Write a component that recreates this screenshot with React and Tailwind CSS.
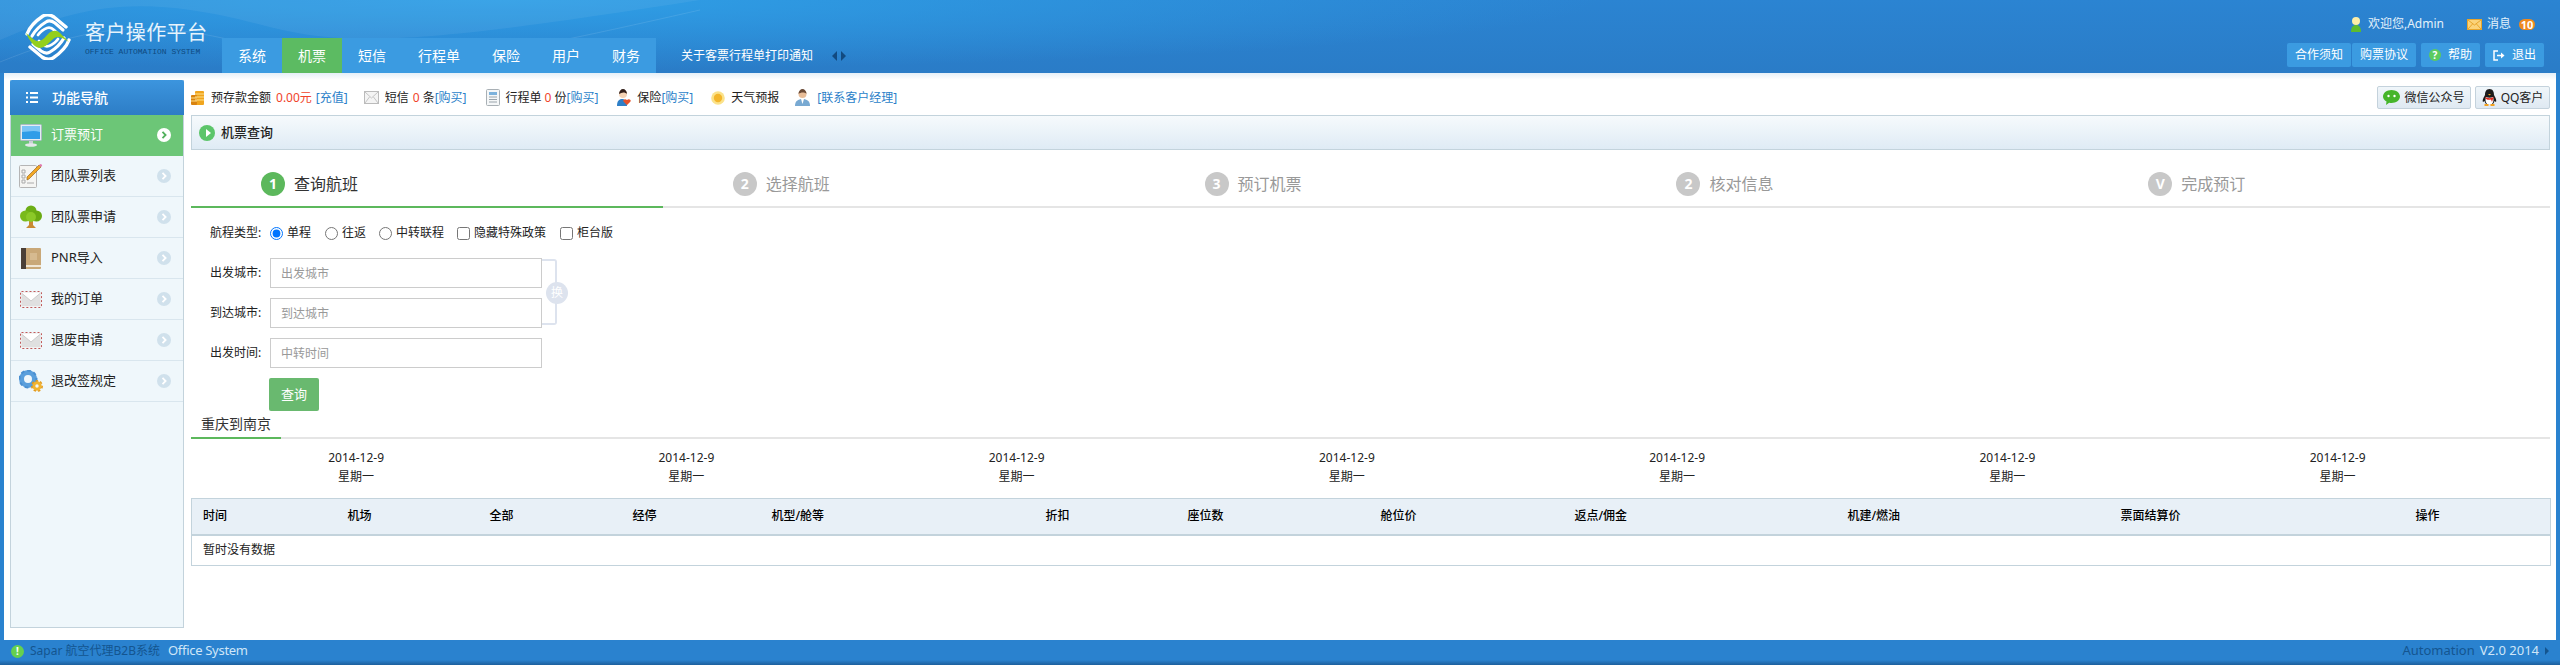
import React from "react";

const tabs = ["系统", "机票", "短信", "行程单", "保险", "用户", "财务"];
const steps = [
  ["1", "查询航班"],
  ["2", "选择航班"],
  ["3", "预订机票"],
  ["2", "核对信息"],
  ["V", "完成预订"],
];
const columns = [
  ["时间", 145], ["机场", 142], ["全部", 143], ["经停", 139], ["机型/舱等", 274], ["折扣", 142],
  ["座位数", 193], ["舱位价", 194], ["返点/佣金", 273], ["机建/燃油", 273], ["票面结算价", 295], ["操作", 146],
];
const dates = [1, 2, 3, 4, 5, 6, 7];

function Logo() {
  const bands = (
    <g fill="none" stroke="#fff" strokeLinecap="round">
      <path d="M2 20C5 12 12 6 18 2c4-2 8-1 11 1l12 10" strokeWidth="3.4" />
      <path d="M7 22c4-7 9-11 14-14 3-2 6-1 9 1l8 7" strokeWidth="3.2" />
      <path d="M13 21c3-4 6-6 9-7 3-1 5 0 7 2l3 3" strokeWidth="2.8" />
    </g>
  );
  return (
    <svg width="46" height="46" viewBox="0 0 46 46" className="shrink-0">
      {bands}
      <g transform="rotate(180 23 23)">{bands}</g>
      <path d="M1 19c4 3 7 7 11 8 5 1 8-4 12-8 4-3 8-3 11 0l9 9c-3-2-5-3-7-4-4-2-7-1-10 2-5 5-8 8-13 8-5-1-10-8-13-15Z" fill="#94cf1d" />
    </svg>
  );
}

function HeaderWave() {
  return (
    <svg className="absolute left-0 top-0" width="700" height="73" viewBox="0 0 700 73">
      <path d="M0 40C70 10 120 0 190 10c60 8 90 25 150 28 80 4 180-10 360-38H0Z" fill="#fff" opacity="0.06" />
      <path d="M0 62c70-28 120-40 190-30 60 9 110 30 170 32 90 2 190-20 340-54" fill="none" stroke="#fff" opacity="0.1" />
    </svg>
  );
}

function Chevron({ active }) {
  return (
    <svg width="14" height="14" viewBox="0 0 14 14" className="shrink-0">
      <circle cx="7" cy="7" r="7" fill={active ? "#fff" : "#d0e1ec"} />
      <path d="M5.5 3.8 8.6 7l-3.1 3.2" fill="none" stroke={active ? "#52b05d" : "#fff"} strokeWidth="1.8" />
    </svg>
  );
}

function Coins() {
  return (
    <svg width="14" height="16" viewBox="0 0 14 16">
      <rect x="4" y="1" width="9" height="14" rx="1" fill="#f0a51e" />
      <rect x="0" y="5" width="6" height="10" rx="1" fill="#d9830f" />
      <path d="M4 4h9M4 7h9M4 10h9M0 8h6M0 11h6" stroke="#ffe08a" />
    </svg>
  );
}

function MailGray() {
  return (
    <svg width="15" height="15" viewBox="0 0 15 15">
      <rect x="0.5" y="1.5" width="14" height="12" fill="#f4f4f4" stroke="#bbb" />
      <path d="m1 2 6.500 6L14 2M1 13l4.500-6M14 13 9.500 7" fill="none" stroke="#c4c4c4" />
    </svg>
  );
}

function DocIcon() {
  return (
    <svg width="14" height="17" viewBox="0 0 14 17">
      <rect x="0.5" y="0.500" width="13" height="16" rx="1" fill="#f5f7f8" stroke="#a9b0b5" />
      <rect x="3" y="3" width="8" height="3" fill="#7db2dc" />
      <path d="M3 8h8M3 10.500h8M3 13h8" stroke="#9aa4ab" />
    </svg>
  );
}

function InsuranceIcon() {
  return (
    <svg width="14" height="17" viewBox="0 0 14 17">
      <path d="M0 17c0-5 2-7 5-7s5 2 5 7Z" fill="#2e7fc7" />
      <circle cx="6" cy="5" r="4" fill="#f4d3b5" />
      <path d="M2 5c0-3 2-5 4-5s4 2 4 5C8 3 5 3 2 5Z" fill="#33201a" />
      <path d="M10 16 6.500 12.500c-1-1.500 1.500-3.500 3.500-1.500 2-2 4.500 0 3.500 1.500Z" fill="#e5522b" />
    </svg>
  );
}

function SunIcon() {
  return (
    <svg width="14" height="14" viewBox="0 0 14 14">
      <circle cx="7" cy="7" r="6.800" fill="#fbe28a" />
      <circle cx="7" cy="7" r="4.200" fill="#f3b62c" />
    </svg>
  );
}

function ManagerIcon() {
  return (
    <svg width="15" height="17" viewBox="0 0 15 17">
      <path d="M0 17c0-5 3-7 7.500-7s7.500 2 7.500 7Z" fill="#78a9d2" />
      <path d="M6 10h3l-1.500 5Z" fill="#fff" />
      <circle cx="7.500" cy="5" r="4" fill="#e8bd98" />
      <path d="M3.500 5c0-3 2-5 4-5s4 2 4 5c-1-2-6-2-8 0Z" fill="#6a4a36" />
    </svg>
  );
}

function Monitor() {
  return (
    <svg width="22" height="23" viewBox="0 0 22 23">
      <rect x="0.500" y="0.500" width="21" height="16" rx="1" fill="#e5edf2" stroke="#a9bac4" />
      <rect x="2" y="2" width="18" height="13" fill="#2f9de8" />
      <path d="M2 2h18v6C13 6 8 8 2 8Z" fill="#7cc5f5" />
      <path d="M9 17h4v3H9Z" fill="#c8d0d4" />
      <ellipse cx="11" cy="21" rx="6" ry="1.800" fill="#e4e8ea" />
    </svg>
  );
}

function Notepad() {
  return (
    <svg width="24" height="24" viewBox="0 0 24 24">
      <rect x="0.500" y="1.500" width="17" height="22" rx="1" fill="#f5f5f3" stroke="#b5b5b5" />
      <path d="M3 6h3v3H3ZM3 11h3v3H3ZM3 16h3v3H3Z" fill="none" stroke="#aaa" />
      <path d="M8 19h7" stroke="#aaa" />
      <path d="m8 16 2-1L22 3l-2-2L8 13Z" fill="#f2a724" stroke="#8c5a15" strokeWidth="0.600" />
      <path d="m20 1 2 2 1-1c.500-1-.500-2-1.500-2Z" fill="#e27bb0" />
    </svg>
  );
}

function Tree() {
  return (
    <svg width="22" height="24" viewBox="0 0 22 24">
      <path d="M9 14h4v6l3 3H6l3-3Z" fill="#c98a33" />
      <circle cx="11" cy="6" r="5.500" fill="#6cae16" />
      <circle cx="5.500" cy="11" r="5.500" fill="#79ba1c" />
      <circle cx="16.500" cy="11" r="5.500" fill="#6aaa12" />
      <circle cx="11" cy="12" r="5" fill="#8bc928" />
    </svg>
  );
}

function Book() {
  return (
    <svg width="20" height="21" viewBox="0 0 20 21">
      <rect x="0" y="0" width="20" height="21" rx="1" fill="#c9a878" />
      <rect x="0" y="0" width="5" height="21" fill="#4a3f37" />
      <rect x="5" y="17" width="15" height="2" fill="#f0e6d4" />
      <path d="M9 5h7v7H9Z" fill="#d6ba90" />
    </svg>
  );
}

function Envelope() {
  return (
    <svg width="22" height="17" viewBox="0 0 22 17">
      <rect x="0.500" y="0.500" width="21" height="16" rx="1" fill="#f2f2f2" stroke="#c05a5a" strokeDasharray="2 2" />
      <path d="m1.500 2 9.500 8 9.500-8v13h-19Z" fill="#e0e0e0" />
      <path d="m1.500 2 9.500 8 9.500-8" fill="#fff" stroke="#ccc" />
    </svg>
  );
}

function Gears() {
  return (
    <svg width="24" height="22" viewBox="0 0 24 22">
      <circle cx="9" cy="9" r="6.500" fill="none" stroke="#5a9fdc" strokeWidth="5" />
      <circle cx="9" cy="9" r="8.500" fill="none" stroke="#4a8fd0" strokeWidth="2" strokeDasharray="3.500 3" />
      <circle cx="18" cy="16" r="3.200" fill="none" stroke="#f3b42f" strokeWidth="3" />
      <circle cx="18" cy="16" r="5.200" fill="none" stroke="#e39a1c" strokeWidth="1.500" strokeDasharray="2.500 2" />
    </svg>
  );
}

function Wechat() {
  return (
    <svg width="17" height="15" viewBox="0 0 17 15">
      <path d="M8.500 0C13 0 17 2.800 17 6.500S13 13 8.500 13c-.8 0-1.600-.1-2.300-.3L3 15l.5-3.500C1.300 10.300 0 8.500 0 6.500 0 2.800 4 0 8.500 0Z" fill="#46b52a" />
      <circle cx="5.500" cy="6" r="1.200" fill="#fff" />
      <circle cx="11.500" cy="6" r="1.200" fill="#fff" />
    </svg>
  );
}

function Penguin() {
  return (
    <svg width="15" height="17" viewBox="0 0 15 17">
      <path d="M7.500 0C11 0 12 3 12 6c1 2 3 5 2 7l-1.500-1c-.3 1-.8 2-1.500 3H4c-.7-1-1.200-2-1.500-3L1 13C0 11 2 8 3 6c0-3 1-6 4.500-6Z" fill="#1b1b1b" />
      <path d="M4 8c2 1 5 1 7 0 1 3 .5 5-1 7H5C3.500 13 3 11 4 8Z" fill="#fff" />
      <path d="M3 8c3 1.500 6 1.500 9 0l-1 2-1 3-1-2.500c-2 .5-3 .5-5-.5Z" fill="#e02a1f" />
      <path d="M2.500 15h4v2h-4ZM8.500 15h4v2h-4Z" fill="#f4a11e" />
      <path d="M6 5h3l-1.500 1.500Z" fill="#f4a11e" />
    </svg>
  );
}

function App() {
  const menu = [
    ["订票预订", <Monitor />, true],
    ["团队票列表", <Notepad />],
    ["团队票申请", <Tree />],
    ["PNR导入", <Book />],
    ["我的订单", <Envelope />],
    ["退废申请", <Envelope />],
    ["退改签规定", <Gears />],
  ];

  return (
    <div className="flex h-[665px] w-[2560px] flex-col overflow-hidden bg-[#2a82cf] font-['Noto_Sans','Noto_Sans_CJK_SC',sans-serif] text-[12px] text-[#222]">
      {/* Header */}
      <header className="relative h-[73px] shrink-0 bg-gradient-to-b from-[#2b84d2] to-[#2a7cc7]">
        <div className="absolute inset-0 bg-[radial-gradient(ellipse_1100px_70px_at_500px_0px,#2f9fe6,transparent)]" />
        <HeaderWave />
        <div className="relative flex h-full">
          <div className="flex w-[222px] shrink-0 pl-[25px] pt-[14px]">
            <Logo />
            <div className="ml-[14px] pt-[6px]">
              <div className="text-[20px] leading-[26px] tracking-[0.4px] text-[#e6f3fc]">客户操作平台</div>
              <div className="mt-[1px] font-['Liberation_Mono',monospace] text-[8px] leading-[10px] text-[#0f4a80]">OFFICE AUTOMATION SYSTEM</div>
            </div>
          </div>

          <nav className="mt-[38px] flex h-[35px] bg-[#3b9be1]">
            {tabs.map((t) => (
              <div key={t} className={`px-4 text-[14px] leading-[35px] text-white ${t === "机票" ? "bg-[#5cbb62]" : ""}`}>
                {t}
              </div>
            ))}
          </nav>

          <div className="ml-[25px] mt-[47px] flex h-[18px] items-center leading-[18px] text-white">
            关于客票行程单打印通知
            <span className="ml-[19px] h-0 w-0 border-y-[5px] border-r-[5px] border-y-transparent border-r-[#124a80]" />
            <span className="ml-[4px] h-0 w-0 border-y-[5px] border-l-[5px] border-y-transparent border-l-[#124a80]" />
          </div>

          <div className="ml-auto mr-[16px] flex flex-col items-end pt-[15px]">
            <div className="mr-[9px] flex h-[18px] items-center text-[#e3f1fb]">
              <svg width="10" height="15" viewBox="0 0 10 15">
                <circle cx="5" cy="4" r="4" fill="#fdeea8" />
                <path d="M0 15c0-5 2-7 5-7s5 2 5 7Z" fill="#5dbb2e" />
              </svg>
              <span className="ml-[7px]">欢迎您,Admin</span>
              <svg className="ml-[23px]" width="15" height="11" viewBox="0 0 15 11">
                <rect x="0.500" y="0.500" width="14" height="10" fill="#fbd37a" stroke="#e8a52c" />
                <path d="m1 1 6.500 5L14 1M1 10l4.500-5M14 10 9.500 5" fill="none" stroke="#e8a52c" />
              </svg>
              <span className="ml-[5px]">消息</span>
              <span className="ml-[8px] h-[11px] w-[16px] rounded-full bg-[#ee8a1e] text-center text-[11px] font-bold leading-[11px] text-white">10</span>
            </div>
            <div className="mt-[10px] flex h-[24px] items-stretch text-white">
              <div className="w-[64px] rounded-[2px] bg-[#3b9be1] text-center leading-[24px]">合作须知</div>
              <div className="ml-[1px] w-[64px] rounded-[2px] bg-[#3b9be1] text-center leading-[24px]">购票协议</div>
              <div className="ml-[5px] flex w-[59px] items-center justify-center gap-[7px] rounded-[2px] bg-[#3b9be1]">
                <span className="h-[12px] w-[12px] rounded-full bg-[#5ccb5f] text-center text-[10px] font-bold leading-[12px]">?</span>
                帮助
              </div>
              <div className="ml-[5px] flex w-[59px] items-center justify-center gap-[7px] rounded-[2px] bg-[#3b9be1]">
                <svg width="12" height="11" viewBox="0 0 12 11" fill="none" stroke="#fff" strokeWidth="1.500">
                  <path d="M5 1H1v9h4M4 5.500h5" />
                  <path d="M8 2.500 11.500 5.500 8 8.500Z" fill="#fff" stroke="none" />
                </svg>
                退出
              </div>
            </div>
          </div>
        </div>
      </header>

      {/* Body */}
      <div className="mx-[4px] flex h-[567px] shrink-0 bg-gradient-to-b from-[#e4eff8] from-0% to-white to-[7px] pl-[6px] pr-[6px] pt-[7px]">
        <aside className="h-[548px] w-[174px] shrink-0 border border-t-0 border-[#c3d3dc] bg-[#eff7fb]">
          <div className="-mx-[1px] flex h-[35px] items-center rounded-t-[2px] bg-gradient-to-b from-[#3c95de] to-[#2d7dc6] pl-[16px] text-[14px] font-medium text-white">
            <svg width="12" height="11" viewBox="0 0 12 11" fill="#fff">
              <path d="M0 0h2v2H0ZM4 0h8v2H4ZM0 4.500h2v2H0ZM4 4.500h8v2H4ZM0 9h2v2H0ZM4 9h8v2H4Z" />
            </svg>
            <span className="ml-[14px]">功能导航</span>
          </div>
          {menu.map(([label, icon, active]) => (
            <div
              key={label}
              className={`flex h-[41px] items-center border-b pr-[12px] text-[13px] ${
                active ? "h-[40px] border-[#6cc677] bg-[#6cc677] text-white" : "border-[#d9e6ee]"
              }`}
            >
              <span className="flex w-[40px] shrink-0 justify-center">{icon}</span>
              <span>{label}</span>
              <span className="ml-auto">
                <Chevron active={active} />
              </span>
            </div>
          ))}
        </aside>

        <main className="ml-[7px] min-w-0 flex-1">
          {/* Balance row */}
          <div className="flex h-[35px] items-center">
            <Coins />
            <span className="ml-[6px]">预存款金额</span>
            <span className="ml-[5px] text-[#f0432a]">0.00元</span>
            <span className="ml-[4px] text-[#2b7fc9]">[充值]</span>
            <span className="ml-[16px] flex"><MailGray /></span>
            <span className="ml-[6px]">短信</span>
            <span className="ml-[4px] text-[#f0432a]">0</span>
            <span className="ml-[3px]">条</span>
            <span className="text-[#2b7fc9]">[购买]</span>
            <span className="ml-[19px] flex"><DocIcon /></span>
            <span className="ml-[6px]">行程单</span>
            <span className="ml-[3px] text-[#f0432a]">0</span>
            <span className="ml-[3px]">份</span>
            <span className="text-[#2b7fc9]">[购买]</span>
            <span className="ml-[19px] flex"><InsuranceIcon /></span>
            <span className="ml-[6px]">保险</span>
            <span className="text-[#2b7fc9]">[购买]</span>
            <span className="ml-[18px] flex"><SunIcon /></span>
            <span className="ml-[6px]">天气预报</span>
            <span className="ml-[16px] flex"><ManagerIcon /></span>
            <span className="ml-[7px] text-[#2b7fc9]">[联系客户经理]</span>
            <div className="ml-auto flex h-[23px] w-[94px] items-center justify-center gap-[4px] rounded-[2px] border border-[#c4d2dc] bg-gradient-to-b from-[#f0f6fa] to-[#dfe9f2]">
              <Wechat />
              微信公众号
            </div>
            <div className="ml-[4px] flex h-[23px] w-[75px] items-center justify-center gap-[4px] rounded-[2px] border border-[#c4d2dc] bg-gradient-to-b from-[#f0f6fa] to-[#dfe9f2]">
              <Penguin />
              QQ客户
            </div>
          </div>

          {/* Title bar */}
          <div className="flex h-[35px] items-center border border-[#c3d3dc] bg-gradient-to-b from-[#f6fafc] to-[#dfebf5] pl-[7px] font-medium">
            <span className="flex h-[16px] w-[16px] items-center justify-center rounded-full bg-[#5cc56a]">
              <span className="ml-[2px] h-0 w-0 border-y-[4px] border-l-[5px] border-y-transparent border-l-white" />
            </span>
            <span className="ml-[6px] text-[13px] leading-none">机票查询</span>
          </div>

          {/* Steps */}
          <div className="grid h-[58px] grid-cols-5">
            {steps.map(([n, label], i) => (
              <div
                key={label}
                className={`flex items-center border-b-2 pl-[70px] pt-[12px] ${i === 0 ? "border-[#5cb85c] text-[#333]" : "border-[#e5e5e5] text-[#999]"}`}
              >
                <span className={`h-[24px] w-[24px] rounded-full text-center text-[14px] font-bold leading-[24px] text-white ${i === 0 ? "bg-[#5cb85c]" : "bg-[#c8c8c8]"}`}>
                  {n}
                </span>
                <span className="ml-[9px] text-[16px]">{label}</span>
              </div>
            ))}
          </div>

          {/* Search form */}
          <div className="pl-[19px]">
            <div className="mt-[13px] flex h-[24px] items-center">
              <span className="w-[60px]">航程类型:</span>
              <input type="radio" name="trip" defaultChecked className="m-0 h-[13px] w-[13px]" />
              <span className="ml-[4px]">单程</span>
              <input type="radio" name="trip" className="ml-[14px] h-[13px] w-[13px]" />
              <span className="ml-[4px]">往返</span>
              <input type="radio" name="trip" className="ml-[13px] h-[13px] w-[13px]" />
              <span className="ml-[4px]">中转联程</span>
              <input type="checkbox" className="ml-[13px] h-[13px] w-[13px]" />
              <span className="ml-[4px]">隐藏特殊政策</span>
              <input type="checkbox" className="ml-[14px] h-[13px] w-[13px]" />
              <span className="ml-[4px]">柜台版</span>
            </div>

            <div className="relative mt-[13px] w-[360px]">
              <div className="flex items-center">
                <span className="w-[60px]">出发城市:</span>
                <input placeholder="出发城市" className="h-[30px] w-[272px] border border-[#ccc] pl-[10px] placeholder:text-[#999]" />
              </div>
              <div className="mt-[10px] flex items-center">
                <span className="w-[60px]">到达城市:</span>
                <input placeholder="到达城市" className="h-[30px] w-[272px] border border-[#ccc] pl-[10px] placeholder:text-[#999]" />
              </div>
              <div className="mt-[10px] flex items-center">
                <span className="w-[60px]">出发时间:</span>
                <input placeholder="中转时间" className="h-[30px] w-[272px] border border-[#ccc] pl-[10px] placeholder:text-[#999]" />
              </div>
              <div className="absolute left-[332px] top-[1px] h-[66px] w-[15px] rounded-r-[3px] border-2 border-l-0 border-[#dde3ee]" />
              <div className="absolute left-[336px] top-[24px] h-[22px] w-[22px] rounded-full bg-[#dde3ee] text-center leading-[22px] text-white">换</div>
            </div>

            <button className="ml-[59px] mt-[10px] block h-[33px] w-[50px] rounded-[2px] bg-[#69b96f] text-[13px] text-white">查询</button>
          </div>

          {/* Route tab */}
          <div className="flex h-[28px] border-b-2 border-[#e5e5e5]">
            <div className="-mb-[2px] w-[90px] border-b-2 border-[#5cb85c] text-center text-[14px] leading-[25px] text-[#333]">重庆到南京</div>
          </div>

          {/* Dates */}
          <div className="mt-[9px] flex">
            {dates.map((d) => (
              <div key={d} className="w-[14%] text-center leading-[19px]">
                <div>2014-12-9</div>
                <div>星期一</div>
              </div>
            ))}
          </div>

          {/* Results table */}
          <table className="mt-[12px] w-full table-fixed border-collapse border border-[#c3d3dc]">
            <colgroup>
              {columns.map(([name, width]) => (
                <col key={name} style={{ width }} />
              ))}
            </colgroup>
            <thead>
              <tr className="h-[36px] border-b-2 border-[#c3d3dc] bg-[#e8f0f7]">
                {columns.map(([name]) => (
                  <th key={name} className="pl-[11px] text-left font-medium text-black">{name}</th>
                ))}
              </tr>
            </thead>
            <tbody>
              <tr className="h-[31px]">
                <td colSpan={12} className="pl-[11px]">暂时没有数据</td>
              </tr>
            </tbody>
          </table>
        </main>
      </div>

      {/* Footer */}
      <footer className="flex h-[25px] shrink-0 items-center justify-between bg-gradient-to-b from-[#2a82cf] from-80% to-[#1c5f9c] pb-[3px] pl-[11px] pr-[11px] text-[13px]">
        <div className="flex items-center">
          <span className="h-[13px] w-[13px] rounded-full bg-[#65d04f] text-center text-[10px] font-bold leading-[13px] text-white">!</span>
          <span className="ml-[6px] text-[12px] text-[#14558f]">Sapar 航空代理B2B系统</span>
          <span className="ml-[8px] tracking-[-0.3px] text-[#cfe6f8]">Office System</span>
        </div>
        <div className="flex items-center">
          <span className="text-[#14558f]">Automation</span>
          <span className="ml-[5px] text-[#cfe6f8]">V2.0 2014</span>
          <span className="ml-[6px] h-0 w-0 border-y-[4px] border-l-[4px] border-y-transparent border-l-[#14558f]" />
        </div>
      </footer>
    </div>
  );
}

export default App;
